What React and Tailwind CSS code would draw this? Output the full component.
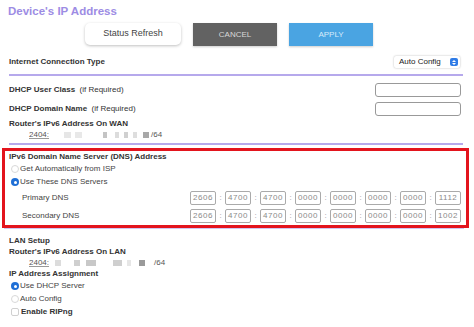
import React from "react";

function Radio({ checked }) {
  return checked ? (
    <span className="w-[8px] h-[8px] rounded-full bg-[#1f6fd6] flex items-center justify-center shrink-0">
      <span className="w-[3px] h-[3px] rounded-full bg-white" />
    </span>
  ) : (
    <span className="w-[8px] h-[8px] rounded-full border border-[#d8d8d8] bg-white shrink-0" />
  );
}

function Blur({ x, w, c }) {
  return <span className="absolute top-[3px] h-[6px]" style={{ left: x, width: w, background: c }} />;
}

function Addr({ blocks, slashX, slash }) {
  return (
    <div className="relative h-[11px] text-[8px] leading-[11px] text-[#555]">
      <span className="absolute left-[29px] underline decoration-[#999]">2404:</span>
      {blocks.map((b, i) => (
        <Blur key={i} x={b[0]} w={b[1]} c={b[2]} />
      ))}
      <span className="absolute" style={{ left: slashX }}>{slash}</span>
    </div>
  );
}

function DnsRow({ label, values }) {
  return (
    <div className="flex items-center h-[14px] pl-[17px]">
      <span className="text-[8px] text-[#444]">{label}</span>
      <div className="ml-auto mr-[5px] flex items-center">
        {values.map((v, i) => (
          <React.Fragment key={i}>
            {i > 0 && <span className="w-[9px] text-center text-[8px] text-[#999]">:</span>}
            <span className="w-[26px] h-[14px] border border-[#aaa] rounded-[2px] flex items-center justify-center text-[8px] tracking-[0.5px] text-[#8a8a8a]">
              {v}
            </span>
          </React.Fragment>
        ))}
      </div>
    </div>
  );
}

export default function App() {
  return (
    <div className="w-[474px] h-[327px] overflow-hidden bg-white text-[#333] font-['Liberation_Sans',Arial,sans-serif]">
      {/* title */}
      <div className="h-[23px] pl-[8px] pt-[5px] text-[11.5px] leading-[13px] font-bold text-[#9d8ce4]">
        Device's IP Address
      </div>
      {/* buttons */}
      <div className="flex h-[23px] pl-[85px] gap-[12px]">
        <div className="w-[96px] h-[22px] rounded-[5px] bg-white shadow-[0_1px_3px_rgba(0,0,0,0.25)] flex items-center justify-center text-[9px] text-[#444]">
          Status Refresh
        </div>
        <div className="w-[84px] h-[23px] bg-[#626262] shadow-[0_1px_2px_rgba(0,0,0,0.2)] flex items-center justify-center text-[8px] text-[#d8d8d8]">
          CANCEL
        </div>
        <div className="w-[84px] h-[23px] bg-[#4aa4e2] shadow-[0_1px_2px_rgba(0,0,0,0.2)] flex items-center justify-center text-[8px] text-[#d6ebfa]">
          APPLY
        </div>
      </div>
      {/* internet connection type */}
      <div className="mt-[10px] h-[12px] flex items-center pl-[9px] pr-[14px]">
        <span className="text-[8px] font-bold text-[#333]">Internet Connection Type</span>
        <div className="ml-auto w-[66px] h-[12px] rounded-[2px] bg-white shadow-[0_0_2px_rgba(0,0,0,0.3)] flex items-center pl-[5px] pr-[2px]">
          <span className="text-[8px] text-[#222]">Auto Config</span>
          <span className="ml-auto w-[8px] h-[8px] rounded-[2px] bg-[#2f7be6] flex flex-col items-center justify-center gap-[1px]">
            <svg width="4" height="2" viewBox="0 0 4 2"><path d="M0 2L2 0L4 2Z" fill="#fff" /></svg>
            <svg width="4" height="2" viewBox="0 0 4 2"><path d="M0 0L2 2L4 0Z" fill="#fff" /></svg>
          </span>
        </div>
      </div>
      <div className="mt-[6px] ml-[9px] w-[454px] h-[2px] bg-[#b6a9ec]" />
      {/* DHCP user class */}
      <div className="mt-[7px] h-[14px] flex items-center pl-[9px] pr-[13px]">
        <span className="text-[8px] text-[#333]">
          <b>DHCP User Class</b>&nbsp; (if Required)
        </span>
        <div className="ml-auto w-[86px] h-[14px] rounded-[3px] border border-[#999] bg-white" />
      </div>
      <div className="mt-[5px] h-[14px] flex items-center pl-[9px] pr-[13px]">
        <span className="text-[8px] text-[#333]">
          <b>DHCP Domain Name</b>&nbsp; (if Required)
        </span>
        <div className="ml-auto w-[86px] h-[14px] rounded-[3px] border border-[#999] bg-white" />
      </div>
      <div className="mt-[2px] h-[11px] leading-[11px] pl-[9px] text-[8px] font-bold text-[#333]">
        Router's IPv6 Address On WAN
      </div>
      <Addr
        blocks={[
          [64, 7, "#e6e6e6"],
          [75, 7, "#e8e8e8"],
          [103, 4, "#c4c4c4"],
          [115, 4, "#dcdcdc"],
          [124, 4, "#d0d0d0"],
          [133, 4, "#dedede"],
          [143, 6, "#a8a8a8"],
        ]}
        slashX={151}
        slash="/64"
      />
      <div className="mt-[3px] ml-[9px] w-[454px] h-[2px] bg-[#b6a9ec]" />
      {/* red box */}
      <div className="mt-[3px] ml-[2px] w-[467px] h-[80px] border-[3px] border-[#e3141d] pt-[1px]">
        <div className="h-[10px] leading-[10px] pl-[4px] text-[8px] font-bold text-[#333]">
          IPv6 Domain Name Server (DNS) Address
        </div>
        <div className="mt-[1px] h-[12px] flex items-center pl-[6px] gap-[1px] text-[8px] text-[#444]">
          <Radio />
          <span>Get Automatically from ISP</span>
        </div>
        <div className="mt-[1px] h-[12px] flex items-center pl-[6px] gap-[1px] text-[8px] text-[#444]">
          <Radio checked />
          <span>Use These DNS Servers</span>
        </div>
        <div className="mt-[3px]">
          <DnsRow label="Primary DNS" values={["2606", "4700", "4700", "0000", "0000", "0000", "0000", "1112"]} />
        </div>
        <div className="mt-[4px]">
          <DnsRow label="Secondary DNS" values={["2606", "4700", "4700", "0000", "0000", "0000", "0000", "1002"]} />
        </div>
      </div>
      <div className="ml-[4px] w-[460px] h-[1px] bg-[#cfc6f2]" />
      {/* LAN */}
      <div className="mt-[6px] h-[11px] leading-[11px] pl-[9px] text-[8px] font-bold text-[#333]">LAN Setup</div>
      <div className="h-[11px] leading-[11px] pl-[9px] text-[8px] font-bold text-[#333]">
        Router's IPv6 Address On LAN
      </div>
      <Addr
        blocks={[
          [55, 6, "#dcdcdc"],
          [74, 6, "#cfcfcf"],
          [86, 10, "#c8c8c8"],
          [113, 9, "#cfcfcf"],
          [127, 4, "#e6e6e6"],
          [139, 6, "#9a9a9a"],
        ]}
        slashX={154}
        slash="/64"
      />
      <div className="h-[11px] leading-[11px] pl-[9px] text-[8px] font-bold text-[#333]">IP Address Assignment</div>
      <div className="mt-[1px] h-[12px] flex items-center pl-[11px] gap-[1px] text-[8px] text-[#444]">
        <Radio checked />
        <span>Use DHCP Server</span>
      </div>
      <div className="mt-[1px] h-[12px] flex items-center pl-[11px] gap-[1px] text-[8px] text-[#444]">
        <Radio />
        <span>Auto Config</span>
      </div>
      <div className="mt-[1px] h-[12px] flex items-center pl-[11px] gap-[2px] text-[8px] text-[#444]">
        <span className="w-[8px] h-[8px] rounded-[2px] border border-[#d0d0d0] bg-white" />
        <b className="text-[#333]">Enable RIPng</b>
      </div>
    </div>
  );
}
